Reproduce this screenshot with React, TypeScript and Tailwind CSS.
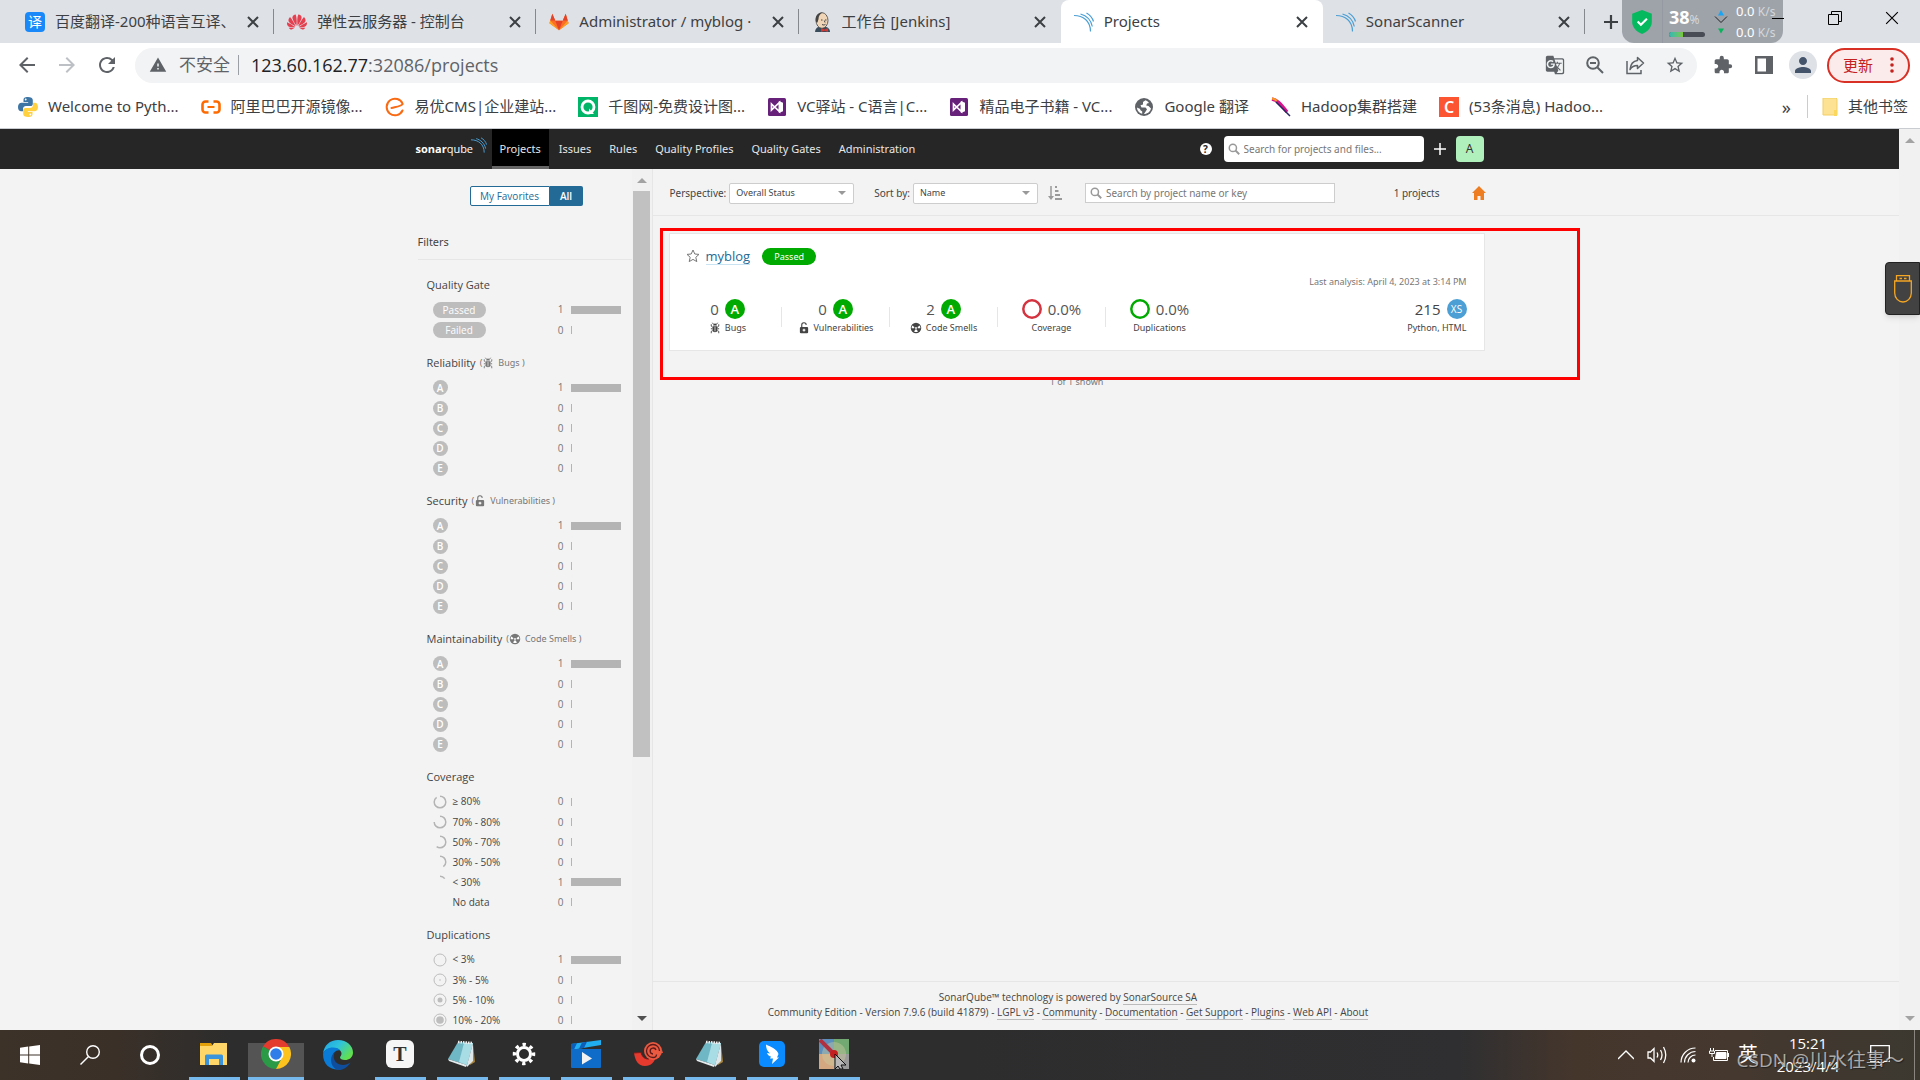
import type { ReactNode } from 'react'
import {
  MdArrowBack,
  MdArrowForward,
  MdExtension,
  MdGTranslate,
  MdPerson,
  MdRefresh,
  MdStarBorder,
  MdWarning,
} from 'react-icons/md'
import { SiHuawei } from 'react-icons/si'

function SonarWaves({ className, color = '#4b9fd5' }: { className?: string; color?: string }) {
  return (
    <svg viewBox="0 0 20 20" className={className} fill="none" stroke={color} strokeWidth="1.2">
      <path d="M0 3.5C9 3.5 16.5 9 16.5 19.5" />
      <path d="M6.500 2C12 3.500 17 8 18.300 14.500" />
      <path d="M12.500 1C16 3 18.300 5.500 19.500 9.500" />
    </svg>
  )
}

function BugIcon({ className }: { className?: string }) {
  return (
    <svg viewBox="0 0 16 16" className={className} fill="none" stroke="currentColor" strokeWidth="1.2">
      <path d="M5.500 4.500a2.500 2.500 0 0 1 5 0z" fill="currentColor" stroke="none" />
      <path d="M4.800 5.500h6.400v5a3.200 3.200 0 0 1-6.400 0z" fill="currentColor" stroke="none" />
      <path d="M4.500 1l1.500 2M11.500 1L10 3M4.800 7L3 5.500V3M11.200 7L13 5.500V3M4.800 9H2.500M11.200 9h2.300M5 11.500l-2 1V15M11 11.500l2 1V15" />
      <path d="M8 6.500v6" stroke="#f3f3f3" strokeWidth="1" />
    </svg>
  )
}

function UnlockIcon({ className }: { className?: string }) {
  return (
    <svg viewBox="0 0 16 16" className={className} fill="none">
      <path d="M5 7V4.200a3 3 0 0 1 6-.4" stroke="currentColor" strokeWidth="1.500" />
      <rect x="2.500" y="6.500" width="11" height="8.500" rx="1.500" fill="currentColor" />
      <path d="M8 9v3.500M6.200 10.800h3.600" stroke="#fff" strokeWidth="1.500" />
    </svg>
  )
}

function SmellIcon({ className }: { className?: string }) {
  return (
    <svg viewBox="0 0 16 16" className={className}>
      <circle cx="8" cy="8" r="7" fill="currentColor" />
      <circle cx="8" cy="8" r="1.200" fill="#fff" />
      <path d="M5.800 6.600L3 4.800A6 6 0 0 0 2.200 8.200h3.400zM10.200 6.600L13 4.800a6 6 0 0 1 .8 3.400h-3.400zM6.900 10L5.500 12.900a6 6 0 0 0 5 0L9.100 10z" fill="#fff" />
    </svg>
  )
}

function SearchIcon({ className }: { className?: string }) {
  return (
    <svg viewBox="0 0 16 16" className={className} fill="none" stroke="currentColor" strokeWidth="2">
      <circle cx="6.500" cy="6.500" r="4.800" />
      <path d="M10 10l5 5" strokeWidth="2.400" />
    </svg>
  )
}

function CloseIcon({ className }: { className?: string }) {
  return (
    <svg viewBox="0 0 12 12" className={className} fill="none" stroke="currentColor">
      <path d="M1 1l10 10M11 1L1 11" />
    </svg>
  )
}

function BaiduIcon() {
  return <span className="flex size-5 items-center justify-center rounded-sm bg-[#1989fa] text-sm leading-none text-white">译</span>
}

function GitlabIcon() {
  return (
    <svg viewBox="0 0 24 22" className="size-5">
      <path d="M12 21L.5 12.500 4 1l3.500 8.500h9L20 1l3.500 11.500z" fill="#fc6d26" />
      <path d="M12 21L7.500 9.500h9z" fill="#e24329" />
      <path d="M12 21L.5 12.500l1-3.200L12 21zM12 21l11.500-8.500-1-3.200z" fill="#fca326" />
      <path d="M4 1L1.500 9.300h6zM20 1l2.500 8.300h-6z" fill="#e24329" />
    </svg>
  )
}

function JenkinsIcon() {
  return (
    <svg viewBox="0 0 20 20" className="size-5">
      <path d="M3 20c0-3 2-5 4-5h6c3 0 5 2 5 5z" fill="#3a4d5c" />
      <ellipse cx="10" cy="8.500" rx="6" ry="7.800" fill="#f0d6b7" stroke="#444" strokeWidth=".8" />
      <path d="M4 10C2.500 4 6 .3 10.500.5 8 2 6.500 4 6.500 7l-1 3.500z" fill="#444" />
      <path d="M9 8h1.500M13 8h1.500M10 12.500c1.500.8 2.500.5 3.500-.2M12.300 8.500l.7 2" stroke="#444" fill="none" />
      <path d="M9 16l3.500 1.500L16 16v4l-3.500-1.300L9 20z" fill="#d33833" />
    </svg>
  )
}

function PythonIcon() {
  return (
    <svg viewBox="0 0 20 20" className="size-5">
      <path d="M9.900 0C6.500 0 5.500 1.300 5.500 3v2h4.700v.7H3.600C1.600 5.700 0 7.100 0 10s1.400 4.300 3.200 4.300H5v-2.200c0-1.700 1.400-3 3-3h4.500c1.400 0 2.300-1 2.300-2.400V3c0-1.900-1.900-3-4.900-3z" fill="#3d75a5" />
      <path d="M10.100 20c3.400 0 4.400-1.300 4.400-3v-2H9.800v-.7h6.600c2 0 3.600-1.400 3.600-4.300s-1.400-4.300-3.200-4.300H15v2.200c0 1.700-1.400 3-3 3H7.500c-1.400 0-2.300 1-2.300 2.400V17c0 1.900 1.900 3 4.900 3z" fill="#ffd141" />
      <circle cx="7.700" cy="2.500" r=".9" fill="#fff" />
      <circle cx="12.300" cy="17.500" r=".9" fill="#fff" />
    </svg>
  )
}

function AliIcon() {
  return (
    <svg viewBox="0 0 20 20" className="size-5" fill="none" stroke="#ff6a00" strokeWidth="2.600">
      <path d="M7.500 4.500H4.500A3 3 0 0 0 1.500 7.500v5a3 3 0 0 0 3 3h3M12.500 4.500h3a3 3 0 0 1 3 3v5a3 3 0 0 1-3 3h-3" />
      <path d="M6.500 10h7" strokeWidth="2" />
    </svg>
  )
}

function EyouIcon() {
  return (
    <svg viewBox="0 0 20 20" className="size-5" fill="none" stroke="#f96a12" strokeWidth="2" strokeLinecap="round">
      <path d="M17.500 13.500A8.300 8.300 0 1 1 17.700 7C17 9 13 9.500 6.500 11" />
    </svg>
  )
}

function QiantuIcon() {
  return (
    <svg viewBox="0 0 20 20" className="size-5">
      <path d="M0 0h20v20H0z" fill="#00b567" />
      <circle cx="10" cy="10" r="6" fill="none" stroke="#fff" strokeWidth="2.800" />
      <path d="M11 11.500l5 5.500h-5z" fill="#fff" />
    </svg>
  )
}

function VsIcon() {
  return (
    <svg viewBox="0 0 20 20" className="size-5">
      <rect x="1" y="1" width="18" height="18" rx="1.500" fill="#68217a" />
      <path d="M4.500 7l8 7.500v-9l-8 7.500z" fill="none" stroke="#fff" strokeWidth="1.700" />
      <path d="M11.800 4L16 5.800v8.400L11.800 16z" fill="#fff" />
    </svg>
  )
}

function GlobeIcon() {
  return (
    <svg viewBox="0 0 20 20" className="size-5">
      <circle cx="10" cy="10" r="9" fill="#5f6368" />
      <path d="M11.500 3.200L9 5v2.500L6.500 8.300l1 2.200h4l1.500 1.700-1.200 2-1.800 2.900c3.500-.2 6.300-2.500 7-5.600L14.500 9l-2.300-.5.800-2 2-.6c-.9-1.300-2.100-2.200-3.500-2.700zM2.900 10.500a7.200 7.200 0 0 0 5.300 6.300v-2.300l-2-1.500v-1z" fill="#fff" />
    </svg>
  )
}

function FeatherIcon() {
  return (
    <svg viewBox="0 0 20 20" className="size-5" fill="none">
      <path d="M1 2c5 1 8 4 15 13" stroke="#d9138a" strokeWidth="3.500" />
      <path d="M1 1.500c2 .2 3.500 1 5 2.500" stroke="#f69923" strokeWidth="2" />
      <path d="M5 5l14 14" stroke="#282661" strokeWidth="1.500" />
    </svg>
  )
}

const tabs: { title: string; icon: ReactNode; active?: boolean }[] = [
  { title: '百度翻译-200种语言互译、', icon: <BaiduIcon /> },
  { title: '弹性云服务器 - 控制台', icon: <SiHuawei className="size-5 text-[#e5404f]" /> },
  { title: 'Administrator / myblog ·', icon: <GitlabIcon /> },
  { title: '工作台 [Jenkins]', icon: <JenkinsIcon /> },
  { title: 'Projects', icon: <SonarWaves className="size-5" />, active: true },
  { title: 'SonarScanner', icon: <SonarWaves className="size-5" /> },
]

function TabStrip() {
  return (
    <div className="relative flex h-[43px] shrink-0 items-center bg-[#dee1e6] pl-3">
      <div className="flex h-full w-[1573px] min-w-0">
        {tabs.map((tab, i) => (
          <div
            key={tab.title}
            className={`flex h-full min-w-0 flex-1 items-center gap-2.5 pr-3 pl-[13px] ${tab.active ? 'rounded-t-lg bg-white' : ''}`}
          >
            <span className="shrink-0">{tab.icon}</span>
            <span className="min-w-0 flex-1 overflow-hidden text-[15px] whitespace-nowrap text-[#3c4043]">{tab.title}</span>
            <button aria-label={`Close ${tab.title}`} className="p-1">
              <CloseIcon className="size-3 stroke-2 text-[#3c4043]" />
            </button>
            <span className={`-mr-3 h-[25px] w-px ${!tab.active && i !== 3 ? 'bg-[#85888d]' : ''}`} />
          </div>
        ))}
      </div>
      <button aria-label="New tab" className="ml-3.5 p-1">
        <svg viewBox="0 0 16 16" className="size-4" stroke="#3c4043" strokeWidth="2.200">
          <path d="M8 1v14M1 8h14" />
        </svg>
      </button>

      <div className="absolute top-0 right-[137px] flex h-[43px] w-[161px] items-center rounded-b-xl bg-[#9ea3aa] text-white">
        <svg viewBox="0 0 20 22" className="ml-2 size-6">
          <path d="M10 0l9 3.500V11c0 5-4 9-9 11-5-2-9-6-9-11V3.500z" fill="#05b95f" />
          <path d="M6 10.500l3 3 5.500-5.500" fill="none" stroke="#fff" strokeWidth="2" />
        </svg>
        <div className="ml-2 flex h-full w-[52px] flex-col justify-center border-l border-[#959aa2] pl-1.5">
          <div className="flex items-baseline leading-5">
            <b className="text-lg leading-5">38</b>
            <span className="text-xs text-[#d5d8db]">%</span>
          </div>
          <div className="mt-1 h-[5px] w-9 overflow-hidden rounded-full bg-[#484c54]">
            <div className="h-full w-[38%] bg-gradient-to-r from-[#2fb7b5] to-[#79c832]" />
          </div>
        </div>
        <svg viewBox="0 0 14 28" className="h-7 w-3.5">
          <path d="M7 2l3 5.500H4z" fill="#18a5f5" />
          <path d="M7 25.500L4 20.500h6z" fill="#08b35c" />
          <path d="M1 8.500l6 6 6-6" fill="none" stroke="#222" />
        </svg>
        <div className="ml-2 text-[13px] leading-[21px]">
          <p>0.0 <span className="text-xs text-[#d5d8db]">K/s</span></p>
          <p>0.0 <span className="text-xs text-[#d5d8db]">K/s</span></p>
        </div>
      </div>

      <div className="absolute top-0 right-0 flex h-9 items-center text-black">
        <button aria-label="Minimize" className="flex w-[57px] justify-center">
          <span className="h-px w-3 bg-black" />
        </button>
        <button aria-label="Restore" className="flex w-[57px] justify-center">
          <svg viewBox="0 0 14 14" className="size-3.5" fill="none" stroke="currentColor">
            <path d="M.5 3.500h10v10H.5zM3.500 3V.5h10v10H11" />
          </svg>
        </button>
        <button aria-label="Close window" className="flex w-[57px] justify-center">
          <CloseIcon className="size-3.5" />
        </button>
      </div>
    </div>
  )
}

function AddressBar() {
  return (
    <div className="flex h-11 shrink-0 items-center bg-white pr-2.5 pl-[15px] text-[#5f6368]">
      <button aria-label="Back" className="mr-4"><MdArrowBack className="size-6" /></button>
      <button aria-label="Forward" className="mr-4 text-[#bdc1c6]"><MdArrowForward className="size-6" /></button>
      <button aria-label="Reload" className="mr-4"><MdRefresh className="size-6" /></button>
      <div className="flex h-[35px] flex-1 items-center rounded-full bg-[#f1f3f4] pr-3 pl-3.5">
        <MdWarning className="size-[18px]" />
        <span className="ml-3 text-[17px]">不安全</span>
        <span className="mr-3 ml-2 h-5 w-px bg-[#9aa0a6]" />
        <p className="flex-1 font-['Open_Sans',sans-serif] text-lg leading-6">
          <span className="text-[#202124]">123.60.162.77</span>:32086/projects
        </p>
        <div className="flex items-center gap-5">
          <button aria-label="Translate"><MdGTranslate className="size-5" /></button>
          <button aria-label="Zoom">
            <svg viewBox="0 0 20 20" className="size-5" fill="none" stroke="currentColor" strokeWidth="2">
              <circle cx="8" cy="8" r="5.800" />
              <path d="M12.500 12.500l5.500 5.500M5 8h6" />
            </svg>
          </button>
          <button aria-label="Share">
            <svg viewBox="0 0 20 20" className="size-5" fill="none" stroke="currentColor" strokeWidth="1.500">
              <path d="M2 6v12.500h14V15" />
              <path d="M12.500 2.500L18.500 8l-6 5.500v-3C9 10.500 6.500 12 5 14.500 5.500 9.500 8 6 12.500 5.500z" strokeLinejoin="round" />
            </svg>
          </button>
          <button aria-label="Bookmark"><MdStarBorder className="size-5" /></button>
        </div>
      </div>
      <button aria-label="Extensions" className="ml-4"><MdExtension className="size-5" /></button>
      <button aria-label="Side panel" className="ml-[22px]">
        <svg viewBox="0 0 18 18" className="size-[18px]">
          <path d="M0 0h18v18H0zM2.500 2.500v13h8.500v-13z" fill="currentColor" fillRule="evenodd" />
        </svg>
      </button>
      <button aria-label="Profile" className="ml-4 flex size-7 items-center justify-center rounded-full bg-[#dee1e6] text-[#44546b]">
        <MdPerson className="size-6" />
      </button>
      <button className="ml-2.5 flex h-[35px] w-[83px] items-center justify-between rounded-full border-2 border-[#d93025] bg-[#fbebea] px-3.5 text-[15px] text-[#c5221f]">
        更新
        <svg viewBox="0 0 4 18" className="h-[18px] w-1" fill="currentColor">
          <circle cx="2" cy="3" r="1.800" />
          <circle cx="2" cy="9" r="1.800" />
          <circle cx="2" cy="15" r="1.800" />
        </svg>
      </button>
    </div>
  )
}

const bookmarks: { title: string; icon: ReactNode }[] = [
  { title: 'Welcome to Pyth...', icon: <PythonIcon /> },
  { title: '阿里巴巴开源镜像...', icon: <AliIcon /> },
  { title: '易优CMS|企业建站...', icon: <EyouIcon /> },
  { title: '千图网-免费设计图...', icon: <QiantuIcon /> },
  { title: 'VC驿站 - C语言|C...', icon: <VsIcon /> },
  { title: '精品电子书籍 - VC...', icon: <VsIcon /> },
  { title: 'Google 翻译', icon: <GlobeIcon /> },
  { title: 'Hadoop集群搭建', icon: <FeatherIcon /> },
  {
    title: '(53条消息) Hadoo...',
    icon: <span className="flex size-5 items-center justify-center bg-[#fc5531] text-base leading-none font-semibold text-white">C</span>,
  },
]

function BookmarksBar() {
  return (
    <div className="flex h-[42px] shrink-0 items-center border-b border-[#c9ccd1] bg-white pb-0.5 pl-[18px] text-[15px] text-[#3c4043]">
      <div className="flex flex-1 items-center gap-[22px]">
        {bookmarks.map((b) => (
          <a key={b.title} href="#" className="flex items-center gap-2.5 whitespace-nowrap">
            <span className="shrink-0">{b.icon}</span>
            {b.title}
          </a>
        ))}
      </div>
      <button aria-label="More bookmarks" className="mr-4 text-lg leading-5">»</button>
      <a href="#" className="flex items-center gap-2.5 border-l border-[#c9ccd1] pr-3 pl-3.5">
        <svg viewBox="0 0 16 18" className="h-[18px] w-4">
          <path d="M1 0h13l1 1v16H1z" fill="#fde293" stroke="#f3cf62" />
          <path d="M12 12h3v6h-3z" fill="#fbd75b" />
        </svg>
        其他书签
      </a>
    </div>
  )
}

const navItems = ['Projects', 'Issues', 'Rules', 'Quality Profiles', 'Quality Gates', 'Administration']

function SonarNav() {
  return (
    <header className="h-10 shrink-0 bg-[#262626] text-[11px] text-[#e6e6e6]">
      <div className="mx-auto flex h-full max-w-[1068px] items-center">
        <a href="#" className="mr-1.5 flex w-[70px] items-start font-['Open_Sans',sans-serif] text-[11px] leading-4 text-white">
          <b>sonar</b>qube
          <SonarWaves className="-mt-1 -ml-0.5 size-4 shrink-0" />
        </a>
        <nav className="flex h-full flex-1 gap-0.5">
          {navItems.map((item) => (
            <a
              key={item}
              href="#"
              className={`flex items-center border-b-[3px] px-2 pt-[3px] ${item === 'Projects' ? 'border-[#666] bg-black' : 'border-transparent'}`}
            >
              {item}
            </a>
          ))}
        </nav>
        <button aria-label="Help" className="mr-3 flex size-3 items-center justify-center rounded-full bg-white text-[10px] leading-3 font-bold text-[#262626]">?</button>
        <div className="flex h-[26px] w-[200px] items-center rounded-sm bg-white px-1 text-[10px]">
          <SearchIcon className="size-3 text-[#999]" />
          <input aria-label="Search for projects and files" placeholder="Search for projects and files..." className="ml-1 min-w-0 flex-1 text-[#444] outline-none placeholder:text-[#777]" />
        </div>
        <button aria-label="Create" className="mx-2.5">
          <svg viewBox="0 0 12 12" className="size-3" stroke="#fff" strokeWidth="1.500">
            <path d="M6 0v12M0 6h12" />
          </svg>
        </button>
        <button aria-label="Account" className="h-[26px] w-7 rounded-sm bg-[#b0f0bc] text-xs text-[#333]">A</button>
      </div>
    </header>
  )
}

function FacetRow({ children, count }: { children?: ReactNode; count: number }) {
  return (
    <a href="#" className="flex h-5 items-center text-[#444] first:h-[21px]">
      <span className="flex flex-1 items-center gap-1.5">{children}</span>
      <span className="w-2 text-center text-[#777]">{count}</span>
      <span className="ml-1.5 h-2 w-[50px]">
        <span className={`block h-full bg-[#b4b4b4] ${count ? 'w-full' : 'w-px'}`} />
      </span>
    </a>
  )
}

function Facet({ title, domain, icon, children }: { title: string; domain?: string; icon?: ReactNode; children: ReactNode }) {
  return (
    <section className="mb-[13px] pr-[11px] pl-[9px]">
      <h3 className="mb-1 flex h-5 items-center gap-1 font-['Open_Sans',sans-serif] text-[11px]">
        {title}
        {domain && (
          <span className="flex items-center font-['Noto_Sans',sans-serif] text-[9px] text-[#777]">
            (
            {icon}
            <span className="ml-1">{domain} )</span>
          </span>
        )}
      </h3>
      <div className="pl-1.5 font-['Open_Sans',sans-serif] text-[10px]">{children}</div>
    </section>
  )
}

function RatingRows() {
  return (
    <>
      {['A', 'B', 'C', 'D', 'E'].map((r) => (
        <FacetRow key={r} count={r === 'A' ? 1 : 0}>
          <span className="flex size-[15px] items-center justify-center rounded-full bg-[#bdbdbd] text-[10px] leading-none font-semibold text-white">{r}</span>
        </FacetRow>
      ))}
    </>
  )
}

const coverage = [
  { label: '≥ 80%', arc: 90, count: 0 },
  { label: '70% - 80%', arc: 75, count: 0 },
  { label: '50% - 70%', arc: 60, count: 0 },
  { label: '30% - 50%', arc: 40, count: 0 },
  { label: '< 30%', arc: 15, count: 1 },
  { label: 'No data', arc: 0, count: 0 },
]

const duplications = [
  { label: '< 3%', dot: 0, count: 1 },
  { label: '3% - 5%', dot: 0.8, count: 0 },
  { label: '5% - 10%', dot: 2.5, count: 0 },
  { label: '10% - 20%', dot: 3.8, count: 0 },
]

function ScrollArrow({ up, dark }: { up?: boolean; dark?: boolean }) {
  return (
    <svg viewBox="0 0 10 6" className={`my-2 h-1.5 w-2.5 ${dark ? 'text-[#505050]' : 'text-[#a3a3a3]'}`} fill="currentColor">
      <path d={up ? 'M0 6l5-5 5 5z' : 'M0 0l5 5 5-5z'} />
    </svg>
  )
}

function Sidebar() {
  return (
    <aside className="flex w-[calc(50%-297px)] shrink-0 justify-end border-r border-[#e6e6e6]">
      <div className="w-[214px] overflow-hidden pt-[17px]">
        <div className="ml-[52px] flex h-5 w-[113px] font-['Open_Sans',sans-serif] text-[10px] text-[#236a97]">
          <button className="flex-1 rounded-l-xs border border-[#236a97] bg-white">My Favorites</button>
          <button className="w-[33px] rounded-r-xs bg-[#236a97] font-semibold text-white">All</button>
        </div>
        <h2 className="mt-[26px] mb-[15px] border-b border-[#e6e6e6] pb-[7px] text-[11px] leading-5">Filters</h2>
        <Facet title="Quality Gate">
          <FacetRow count={1}><span className="w-[53px] rounded-full bg-[#bdbdbd] text-center leading-4 text-white">Passed</span></FacetRow>
          <FacetRow count={0}><span className="w-[53px] rounded-full bg-[#bdbdbd] text-center leading-4 text-white">Failed</span></FacetRow>
        </Facet>
        <Facet title="Reliability" domain="Bugs" icon={<BugIcon className="size-3" />}>
          <RatingRows />
        </Facet>
        <Facet title="Security" domain="Vulnerabilities" icon={<UnlockIcon className="size-3" />}>
          <RatingRows />
        </Facet>
        <Facet title="Maintainability" domain="Code Smells" icon={<SmellIcon className="size-3" />}>
          <RatingRows />
        </Facet>
        <Facet title="Coverage">
          {coverage.map((c) => (
            <FacetRow key={c.label} count={c.count}>
              <svg viewBox="0 0 14 14" className="size-3.5 -rotate-90" fill="none">
                <circle cx="7" cy="7" r="5.800" stroke="#b4b4b4" strokeWidth="1.500" pathLength={100} strokeDasharray={`${c.arc} 100`} />
              </svg>
              {c.label}
            </FacetRow>
          ))}
        </Facet>
        <Facet title="Duplications">
          {duplications.map((d) => (
            <FacetRow key={d.label} count={d.count}>
              <svg viewBox="0 0 14 14" className="size-3.5">
                <circle cx="7" cy="7" r="6" fill="none" stroke="#bdbdbd" />
                <circle cx="7" cy="7" r={d.dot} fill="#bdbdbd" />
              </svg>
              {d.label}
            </FacetRow>
          ))}
        </Facet>
      </div>
      <div className="flex w-5 shrink-0 flex-col items-center bg-[#f1f1f1]">
        <ScrollArrow up />
        <div className="h-[566px] w-[17px] bg-[#c1c1c1]" />
        <div className="flex-1" />
        <ScrollArrow dark />
      </div>
    </aside>
  )
}

function Dropdown({ label, value }: { label: string; value: string }) {
  return (
    <label className="flex items-center gap-[3px]">
      {label}
      <span className="relative">
        <select className="block h-[21px] w-[125px] appearance-none rounded-xs border border-[#cdcdcd] bg-white px-1.5 text-[9px] text-[#444]">
          <option>{value}</option>
        </select>
        <svg viewBox="0 0 8 4" className="pointer-events-none absolute top-2 right-2 h-1 w-2" fill="#999">
          <path d="M0 0h8L4 4z" />
        </svg>
      </span>
    </label>
  )
}

function Toolbar() {
  return (
    <div className="border-b border-[#e6e6e6] text-[10px]">
      <div className="flex h-[46px] max-w-[833px] items-center pt-0.5 pl-[17px]">
        <Dropdown label="Perspective:" value="Overall Status" />
        <span className="w-5" />
        <Dropdown label="Sort by:" value="Name" />
        <button aria-label="Sort direction" className="ml-2.5">
          <svg viewBox="0 0 14 14" className="size-3.5" fill="none" stroke="#999" strokeWidth="2">
            <path d="M3 0v11" strokeWidth="1.500" />
            <path d="M0 10l3 4 3-4z" fill="#999" stroke="none" />
            <path d="M7 1h2M7 5h3.500M7 9h5M7 13h7" />
          </svg>
        </button>
        <div className="ml-[23px] flex h-5 w-[250px] items-center border border-[#cdcdcd] bg-white px-1">
          <SearchIcon className="size-3 text-[#999]" />
          <input aria-label="Search projects" placeholder="Search by project name or key" className="ml-1 min-w-0 flex-1 outline-none placeholder:text-[#777]" />
        </div>
        <span className="ml-auto">1 projects</span>
        <a href="#" aria-label="Home" className="ml-8">
          <svg viewBox="0 0 14 14" className="size-3.5" fill="#ed7d20">
            <path d="M7 0l7 7h-2v7H8.500v-4h-3v4H2V7H0z" />
          </svg>
        </a>
      </div>
    </div>
  )
}

function Measure({ value, label, children }: { value: ReactNode; label: string; children?: ReactNode }) {
  return (
    <div className="flex w-[108px] flex-col items-center">
      <div className="flex h-5 items-center gap-1.5 font-['Open_Sans',sans-serif] text-[15px] text-[#555]">{value}</div>
      <div className="mt-px flex h-4 items-center gap-1">
        {children}
        {label}
      </div>
    </div>
  )
}

function Rating() {
  return <span className="flex size-5 items-center justify-center rounded-full bg-[#00aa00] text-[13px] leading-none font-semibold text-white">A</span>
}

function Ring({ color }: { color: string }) {
  return (
    <svg viewBox="0 0 20 20" className="size-5" fill="none" stroke={color} strokeWidth="2.500">
      <circle cx="10" cy="10" r="8.700" />
    </svg>
  )
}

function Divider() {
  return <span className="mt-2 -ml-px h-5 w-px bg-[#e6e6e6]" />
}

function ProjectCard() {
  return (
    <div className="relative mt-[17px] ml-4 max-w-[816px] text-[9px]">
      <article className="h-[118px] border border-[#e6e6e6] bg-white pt-[13px] pr-[17px]">
        <div className="flex h-[18px] items-center pl-4">
          <button aria-label="Favorite">
            <svg viewBox="0 0 14 14" className="size-3.5" fill="none" stroke="#777">
              <path d="M7 1l1.800 4 4.200.4-3.200 2.900 1 4.300L7 10.400l-3.800 2.200 1-4.300L1 5.400 5.200 5z" />
            </svg>
          </button>
          <a href="#" className="ml-1.5 border-b border-[#cae3f2] font-['Open_Sans',sans-serif] text-[13px] leading-4 text-[#236a97]">myblog</a>
          <span className="ml-3 w-[54px] rounded-full bg-[#00aa00] text-center leading-[17px] text-white">Passed</span>
        </div>
        <p className="mt-[9px] text-right leading-4 text-[#777]">Last analysis: April 4, 2023 at 3:14 PM</p>
        <div className="mt-[9px] flex pl-1">
          <Measure value={<>0<Rating /></>} label="Bugs"><BugIcon className="size-3" /></Measure>
          <Divider />
          <Measure value={<>0<Rating /></>} label="Vulnerabilities"><UnlockIcon className="size-3" /></Measure>
          <Divider />
          <Measure value={<>2<Rating /></>} label="Code Smells"><SmellIcon className="size-3" /></Measure>
          <Divider />
          <Measure value={<><Ring color="#d4333f" />0.0%</>} label="Coverage" />
          <Divider />
          <Measure value={<><Ring color="#00aa00" />0.0%</>} label="Duplications" />
          <div className="ml-auto flex flex-col items-end">
            <div className="flex h-5 items-center gap-1.5 font-['Open_Sans',sans-serif] text-[15px] text-[#444]">
              215
              <span className="flex size-5 items-center justify-center rounded-full bg-[#4b9fd5] text-[10px] text-white">XS</span>
            </div>
            <span className="mt-px leading-4">Python, HTML</span>
          </div>
        </div>
      </article>
      <p className="mt-[21px] text-center leading-5 text-[#777]">1 of 1 shown</p>
      <div className="pointer-events-none absolute -top-[5px] -left-[9px] h-[152px] w-[920px] border-[3px] border-[#ff0000]" />
    </div>
  )
}

const footerLinks = ['LGPL v3', 'Community', 'Documentation', 'Get Support', 'Plugins', 'Web API', 'About']

function Footer() {
  return (
    <footer className="mt-auto border-t border-[#e6e6e6] pt-2 pb-2.5 font-['Open_Sans',sans-serif] text-[10px] leading-[15px]">
      <div className="max-w-[831px] text-center">
        <p>
          SonarQube™ technology is powered by <a href="#" className="border-b border-[#bbb]">SonarSource SA</a>
        </p>
        <p>
          Community Edition - Version 7.9.6 (build 41879)
          {footerLinks.map((l) => (
            <span key={l}> - <a href="#" className="border-b border-[#bbb]">{l}</a></span>
          ))}
        </p>
      </div>
    </footer>
  )
}

function Explorer() {
  return (
    <svg viewBox="0 0 28 24" className="h-6 w-7">
      <path d="M0 1h11l2 3h-13z" fill="#e3a008" />
      <path d="M0 4h12l2-3h13v22H0z" fill="#ffd667" />
      <path d="M5 23v-9q0-1.500 1.500-1.500h15Q23 12.500 23 14v9h-4v-6H9v6z" fill="#3b93d9" />
    </svg>
  )
}

function Chrome() {
  return (
    <svg viewBox="0 0 30 30" className="size-[30px]">
      <path d="M15 15L2 7.500A15 15 0 0 1 28 7.500z" fill="#e33b2e" />
      <path d="M15 15L2 7.500A15 15 0 0 0 15 30l6-11z" fill="#2a9a47" />
      <path d="M15 8h13.300A15 15 0 0 1 15 30l6.100-11.500z" fill="#fcc31e" />
      <circle cx="15" cy="15" r="7.500" fill="#fff" />
      <circle cx="15" cy="15" r="5.800" fill="#2f7de9" />
    </svg>
  )
}

function Edge() {
  return (
    <svg viewBox="0 0 30 30" className="size-[30px]">
      <defs>
        <linearGradient id="edgeTop" x1="0" y1="0" x2="1" y2=".6">
          <stop offset="0" stopColor="#1ea1e4" />
          <stop offset=".5" stopColor="#2fc3dc" />
          <stop offset="1" stopColor="#63e04d" />
        </linearGradient>
      </defs>
      <path d="M0 14C1 5 7 0 15 0c9 0 15 6 15 12.500 0 5-4 7.500-8 7.500-3 0-5-1-5-2.500 0-1 1.500-1.500 1.500-4C18.500 10 14 8 10 8c-5 0-9 2.500-10 6z" fill="url(#edgeTop)" />
      <path d="M0 14c1-4 5-6.500 10-6.500 3.500 0 6 1.200 7.500 3-4-1-8 2-8 7 0 6 5 11 11 11C11 32 0 27 0 14z" fill="#0a7bd6" />
      <path d="M12 12c-3 4-1 13 8 13 3 0 5-1 7.500-2.500C24 28 20 30 16 30 8 29 5 17 12 12z" fill="#0f4e9c" />
    </svg>
  )
}

function Typora() {
  return <span className="flex size-7 items-center justify-center rounded-md bg-[#f6f6f6] font-['Liberation_Serif',serif] text-xl leading-none font-bold text-[#333]">T</span>
}

function Notepad() {
  return (
    <svg viewBox="0 0 28 28" className="size-7">
      <path d="M25 4l2 18-5 3z" fill="#a8843c" />
      <path d="M10 2l15 1-6 22L0 19z" fill="#6fb7c4" />
      <path d="M16 3l9 0-6 22-8-3z" fill="#a9dde5" />
      <path d="M0 19l19 6-1 2L1 21z" fill="#e4ecee" />
      <path d="M25 3l0 18-6 6v-2z" fill="#dfe7ea" />
      <path d="M10 2l15 1" stroke="#eee" strokeWidth="2.500" strokeDasharray="1.500 1" />
    </svg>
  )
}

function Gear() {
  return (
    <svg viewBox="0 0 24 24" className="size-6" fill="none" stroke="#fff">
      <circle cx="12" cy="12" r="6.500" strokeWidth="3" />
      <circle cx="12" cy="12" r="9.500" strokeWidth="3.500" pathLength={80} strokeDasharray="4.500 5.500" strokeDashoffset="2" />
    </svg>
  )
}

function Movies() {
  return (
    <svg viewBox="0 0 30 30" className="size-[30px]">
      <path d="M0 5l30-4v5L0 11z" fill="#20aef0" />
      <path d="M0 5l6-1-3 6.500-3 .5zM11 3.500l5-.7-3 6.200-5 .7z" fill="#0c5eb8" />
      <path d="M0 10h30v18q0 1-1 1H1q-1 0-1-1z" fill="#0f6cc9" />
      <path d="M11 13l10 6.500-10 6z" fill="#f3f3f3" />
    </svg>
  )
}

function Shell() {
  return (
    <svg viewBox="0 0 30 26" className="h-[26px] w-[30px]" fill="none">
      <path d="M1 12l7-.5c1 4 3 6.500 7 6.500l8-3c-1 6-5 10-11 10C5 25 2 19 1 12z" fill="#e63a2e" />
      <path d="M1 12l7-.5c1 4 4 7 8 6.500" stroke="#7a1d1a" />
      <circle cx="20" cy="10" r="9" fill="#ea5a41" />
      <path d="M28 12h2l-1-3z" fill="#ea5a41" />
      <path d="M26.500 10a6.500 6.500 0 1 0-6.500 6.500c3 0 3.500-2 3.500-3M23 9a3 3 0 1 0-3 4" stroke="#5a1b1b" strokeWidth="1.300" />
    </svg>
  )
}

function Dingtalk() {
  return (
    <svg viewBox="0 0 26 26" className="size-[26px]">
      <rect width="26" height="26" rx="5" fill="#0a8bff" />
      <path d="M7 3.500c5 2.500 11 4.500 12.500 9.500L18 16.500h2L13 23l1-5.500h-3l1-2C9 15 8 12 8 12l3 .5C8 10 7 7 7 3.500z" fill="#fff" />
    </svg>
  )
}

function Capture() {
  return (
    <svg viewBox="0 0 30 30" className="size-[30px]">
      <path d="M0 0h15v15H0z" fill="#5c8fbd" />
      <path d="M15 0h15v15H15z" fill="#72a871" />
      <path d="M0 15h15v15H0z" fill="#d4a880" />
      <path d="M15 15h15v15H15z" fill="#9a9a9a" />
      <circle cx="15" cy="15" r="12" fill="#c9c9a0" opacity=".45" />
      <path d="M1 1l14 14" stroke="#b03040" strokeWidth="4" />
      <circle cx="15" cy="15" r="4" fill="#c4201f" />
      <path d="M16 15l11 11h-5l2 4h-3l-2-3-3 3z" fill="#b9b9b9" stroke="#111" />
    </svg>
  )
}

const taskApps: { name: string; icon: ReactNode; state?: 'open' | 'focused' }[] = [
  { name: 'Explorer', icon: <Explorer />, state: 'open' },
  { name: 'Chrome', icon: <Chrome />, state: 'focused' },
  { name: 'Edge', icon: <Edge /> },
  { name: 'Typora', icon: <Typora />, state: 'open' },
  { name: 'Notepad', icon: <Notepad />, state: 'open' },
  { name: 'Settings', icon: <Gear />, state: 'open' },
  { name: 'Movies', icon: <Movies />, state: 'open' },
  { name: 'Shell', icon: <Shell />, state: 'open' },
  { name: 'Notes', icon: <Notepad />, state: 'open' },
  { name: 'DingTalk', icon: <Dingtalk />, state: 'open' },
  { name: 'Capture', icon: <Capture />, state: 'open' },
]

function Taskbar() {
  return (
    <div className="relative flex h-[50px] shrink-0 items-center bg-[linear-gradient(90deg,#3d3228_0%,#3a3028_6%,#2d2d2d_12%,#2d2d2e_50%,#2f2f31_76%,#45362c_82%,#45382f_90%,#3c3830_100%)] text-white">
      <button aria-label="Start" className="flex w-[60px] justify-center">
        <svg viewBox="0 0 20 20" className="size-5" fill="#fff">
          <path d="M0 2.800l8.200-1.200v8H0zM9.200 1.400L20 0v9.600H9.200zM0 10.500h8.200v8L0 17.300zM9.200 10.500H20V20L9.200 18.600z" />
        </svg>
      </button>
      <button aria-label="Search" className="flex w-[60px] justify-center">
        <svg viewBox="0 0 20 20" className="size-5" fill="none" stroke="#fff" strokeWidth="1.400">
          <circle cx="13" cy="7" r="6.300" />
          <path d="M8.500 11.500L.5 19.500" />
        </svg>
      </button>
      <button aria-label="Cortana" className="flex w-[60px] justify-center">
        <span className="size-5 rounded-full border-[3px] border-white" />
      </button>
      <div className="ml-[3px] flex h-full">
        {taskApps.map((app) => (
          <button
            key={app.name}
            aria-label={app.name}
            className={`mx-[3px] flex w-14 flex-col items-center ${app.state === 'focused' ? 'mt-[13px] h-[37px] bg-[#545455]' : 'h-full'}`}
          >
            <span className={`flex min-h-0 flex-1 items-center ${app.state === 'focused' ? 'pb-3' : ''}`}>{app.icon}</span>
            {app.state && <span className={`h-[3px] shrink-0 bg-[#76b9ed] ${app.state === 'focused' ? 'w-full' : 'w-[51px]'}`} />}
          </button>
        ))}
      </div>
      <div className="ml-auto flex items-center gap-[13px]">
        <svg viewBox="0 0 16 10" className="h-2.5 w-4" fill="none" stroke="#fff" strokeWidth="1.300">
          <path d="M0 9l8-8 8 8" />
        </svg>
        <svg viewBox="0 0 20 18" className="h-[18px] w-5" fill="none" stroke="#fff" strokeWidth="1.300">
          <path d="M1 6h2.500L7 2.500v13L3.500 12H1zM10 6.500q1.500 2.500 0 5M13.500 4q3 5 0 10M16.500 1q4.500 8 0 16" />
        </svg>
        <svg viewBox="0 0 16 16" className="size-4" fill="none" stroke="#fff" strokeWidth="1.200">
          <path d="M1 15.500C1 7.500 7.500 1 15.500 1M4.500 15.500c0-6 5-11 11-11M8 15.500C8 11.400 11.400 8 15.500 8" />
          <circle cx="13.500" cy="13.500" r="2" fill="#fff" stroke="none" />
        </svg>
        <svg viewBox="0 0 20 14" className="h-3.5 w-5" fill="none" stroke="#fff">
          <path d="M6 2.500h12.500v10H4.500V9M19.500 5v4M1.500 0v3M4.500 0v3M.5 3h5v2.500H.5zM3 6v3" />
          <path d="M7.500 4.500H17v6H6.500z" fill="#fff" />
        </svg>
        <span className="-ml-1 text-xl leading-none">英</span>
        <div className="w-[74px] text-center font-['Open_Sans',sans-serif] text-[15px] leading-[23px]">
          <p>15:21</p>
          <p>2023/4/4</p>
        </div>
        <svg viewBox="0 0 20 20" className="mr-[18px] ml-3 size-5" fill="none" stroke="#fff" strokeWidth="1.300">
          <path d="M.7.7h18.600v15.600H14l-3 3-3-3H.7z" />
        </svg>
      </div>
      <span className="mr-[5px] ml-1.5 h-full w-px bg-[#8a857e]" />
      <span className="absolute right-4 bottom-1 font-['Open_Sans','Noto_Sans_CJK_SC',sans-serif] text-[19px] leading-8 whitespace-nowrap text-white/60 [text-shadow:1px_1px_1px_#222]">CSDN @川水往事～</span>
    </div>
  )
}

export default function App() {
  return (
    <div className="flex h-screen flex-col overflow-hidden bg-[#f3f3f3] font-['Noto_Sans','Noto_Sans_CJK_SC',sans-serif] text-[#444]">
      <TabStrip />
      <AddressBar />
      <BookmarksBar />
      <div className="relative flex min-h-0 flex-1">
        <div className="flex min-w-0 flex-1 flex-col">
          <SonarNav />
          <div className="flex min-h-0 flex-1">
            <Sidebar />
            <main className="flex min-w-0 flex-1 flex-col">
              <Toolbar />
              <ProjectCard />
              <Footer />
            </main>
          </div>
        </div>
        <div className="flex w-[21px] shrink-0 flex-col items-center justify-between bg-[#f1f1f1]">
          <ScrollArrow up />
          <ScrollArrow />
        </div>
        <button aria-label="USB device" className="absolute top-[133px] right-0 flex h-[53px] w-[35px] items-center justify-center rounded-l-sm border border-[#222] bg-[#424242] shadow-md">
          <svg viewBox="0 0 18 28" className="h-7 w-[18px]" fill="none" stroke="#f5a623" strokeWidth="1.300">
            <path d="M2.500 6V.7h13V6M.7 6h16.600v12a8.300 9 0 0 1-16.600 0zM5.500 3.500h2.500M10 3.500h2.500" />
          </svg>
        </button>
      </div>
      <Taskbar />
    </div>
  )
}
